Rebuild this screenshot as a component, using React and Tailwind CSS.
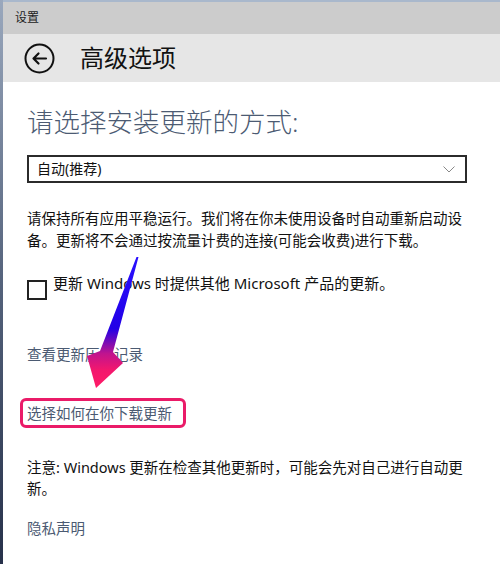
const FONT = { fontFamily: '"Noto Sans", "Noto Sans CJK SC", sans-serif' };

function BackButton() {
  return (
    <svg width="31" height="31" viewBox="0 0 31 31" fill="none">
      <circle cx="15.5" cy="15.5" r="14" stroke="#111" strokeWidth="2" />
      <path d="M22 15.5H9.5M14.5 10.5l-5 5 5 5" stroke="#111" strokeWidth="2.2" strokeLinecap="round" strokeLinejoin="round" />
    </svg>
  );
}

function Arrow() {
  return (
    <svg className="absolute left-0 top-0 pointer-events-none" width="500" height="564" viewBox="0 0 500 564">
      <defs>
        <linearGradient id="arr" x1="0" y1="256" x2="0" y2="388" gradientUnits="userSpaceOnUse">
          <stop offset="0" stopColor="#2a10ff" />
          <stop offset="0.55" stopColor="#2200e6" />
          <stop offset="0.74" stopColor="#c0148e" />
          <stop offset="0.86" stopColor="#f2176e" />
          <stop offset="1" stopColor="#ff1b66" />
        </linearGradient>
      </defs>
      <polygon points="136.5,257 138.5,257 113,352 123,363 96,388 87,356 100,351" fill="url(#arr)" />
    </svg>
  );
}

export default function App() {
  return (
    <div className="relative w-[500px] h-[564px] flex overflow-hidden bg-white" style={FONT}>
      <div className="w-[3px] bg-gradient-to-b from-[#9aa8bd] via-[#55637c] to-[#27314a]" />
      <div className="flex-1 flex flex-col">
        <div className="h-[2px] bg-[#a9b8cc]" />
        <div className="h-[32px] bg-[#cccccc] flex items-center pl-[12px] text-[12px] text-[#222]">设置</div>
        <div className="h-[48px] bg-[#e6e6e6] flex items-center pl-[21px]">
          <BackButton />
          <span className="ml-[25px] text-[24px] leading-[30px] text-[#111]">高级选项</span>
        </div>
        <div className="pl-[24px] pt-[24px] flex flex-col items-start">
          <h1 className="text-[26.5px] leading-[32px] text-[#4c5b73] font-light">请选择安装更新的方式:</h1>
          <div className="mt-[17px] w-[440px] h-[28px] border-2 border-[#2b2b2b] flex items-center justify-between pl-[8px] pr-[10px]">
            <span className="text-[14px] leading-[20px] text-[#111]">自动(推荐)</span>
            <svg width="12" height="7" viewBox="0 0 12 7" fill="none">
              <path d="M0.5 0.5l5.5 5.5 5.5-5.5" stroke="#888" strokeWidth="1" />
            </svg>
          </div>
          <p className="mt-[24px] w-[442px] text-[14.5px] leading-[22px] text-[#111]">
            请保持所有应用平稳运行。我们将在你未使用设备时自动重新启动设备。更新将不会通过按流量计费的连接(可能会收费)进行下载。
          </p>
          <div className="mt-[22px] flex items-start">
            <div className="mt-[7px] w-[20px] h-[20px] border-2 border-[#222]" />
            <span className="ml-[6px] text-[15px] leading-[20px] text-[#111]">更新 Windows 时提供其他 Microsoft 产品的更新。</span>
          </div>
          <a className="mt-[44px] text-[14.5px] leading-[20px] text-[#4b5a72]">查看更新历史记录</a>
          <a className="mt-[34px] -ml-[7px] border-[3px] border-[#ea1b68] rounded-[6px] pl-[4px] pr-[11px] pt-[2px] pb-[2px] text-[14.5px] leading-[20px] text-[#4b5a72]">
            选择如何在你下载更新
          </a>
          <p className="mt-[29px] w-[442px] text-[14.5px] leading-[21px] text-[#111]">
            注意: Windows 更新在检查其他更新时，可能会先对自己进行自动更新。
          </p>
          <a className="mt-[19px] text-[14.5px] leading-[20px] text-[#4b5a72]">隐私声明</a>
        </div>
      </div>
      <Arrow />
    </div>
  );
}
